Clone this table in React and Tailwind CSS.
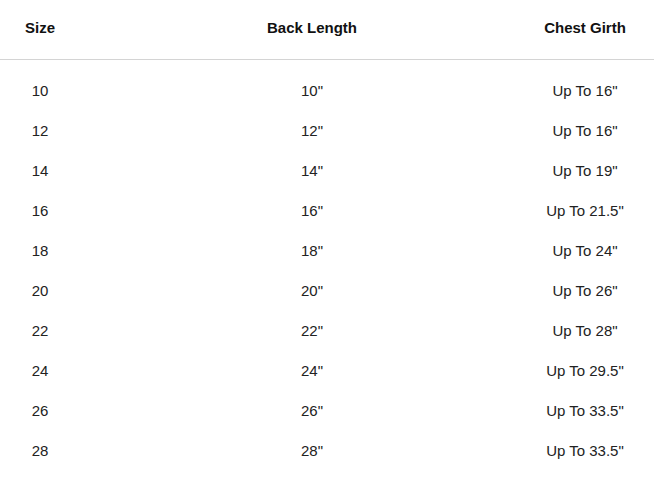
import React from 'react';

const rows = [
  ['10', '10"', 'Up To 16"'],
  ['12', '12"', 'Up To 16"'],
  ['14', '14"', 'Up To 19"'],
  ['16', '16"', 'Up To 21.5"'],
  ['18', '18"', 'Up To 24"'],
  ['20', '20"', 'Up To 26"'],
  ['22', '22"', 'Up To 28"'],
  ['24', '24"', 'Up To 29.5"'],
  ['26', '26"', 'Up To 33.5"'],
  ['28', '28"', 'Up To 33.5"'],
];

const SizeChart = () => {
  return (
    <div className="w-[654px] h-[486px] bg-white text-[15px] font-['Liberation_Sans',Arial,sans-serif]">
      <div className="flex items-center h-[60px] pb-[3px] border-b border-[#d4d4d4] font-bold text-[#111]">
        <div className="w-[80px] text-center">Size</div>
        <div className="w-[408px] ml-[28px] text-center">Back Length</div>
        <div className="w-[138px] text-center">Chest Girth</div>
      </div>
      <div className="pt-[11px] text-[#222]">
        {rows.map(([size, back, chest]) => (
          <div key={size} className="flex items-center h-[40px]">
            <div className="w-[80px] text-center">{size}</div>
            <div className="w-[408px] ml-[28px] text-center">{back}</div>
            <div className="w-[138px] text-center">{chest}</div>
          </div>
        ))}
      </div>
    </div>
  );
};

export default function App() {
  return <SizeChart />;
}
